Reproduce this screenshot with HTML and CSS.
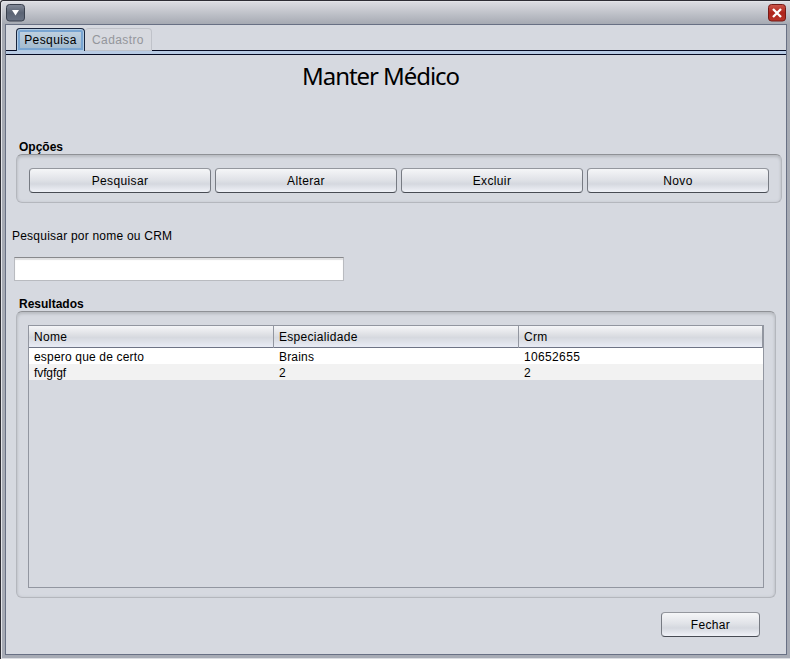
FILE: index.html
```html
<!DOCTYPE html>
<html lang="pt-BR">
<head>
<meta charset="utf-8">
<title>Manter Médico</title>
<link rel="stylesheet" href="styles.css">
</head>
<body>
<div class="window">
  <header class="titlebar">
    <svg class="icon" width="19" height="18" viewBox="0 0 19 18">
      <defs><linearGradient id="g" x1="0" y1="0" x2="0" y2="1"><stop offset="0" stop-color="#848b99"/><stop offset=".5" stop-color="#5b6474"/><stop offset="1" stop-color="#697283"/></linearGradient></defs>
      <rect x=".5" y=".5" width="18" height="16.5" rx="3" fill="url(#g)" stroke="#3a414e"/>
      <path d="M6 6h7l-3.500 5.500z" fill="#fff"/>
    </svg>
    <svg class="icon" width="18" height="18" viewBox="0 0 18 18">
      <defs><linearGradient id="r" x1="0" y1="0" x2="0" y2="1"><stop offset="0" stop-color="#cd584d"/><stop offset=".5" stop-color="#ae241b"/><stop offset="1" stop-color="#b83329"/></linearGradient></defs>
      <rect x=".5" y=".5" width="17" height="16.5" rx="3" fill="url(#r)" stroke="#761a16"/>
      <path d="M5 5l8 8M13 5l-8 8" stroke="#fff" stroke-width="2.300"/>
    </svg>
  </header>
  <main class="content">
    <nav class="tabs">
      <div class="tab active">Pesquisa</div>
      <div class="tab disabled">Cadastro</div>
    </nav>
    <div class="strip"></div>
    <h1>Manter Médico</h1>
    <h2 class="options-title">Opções</h2>
    <section class="panel options">
      <button>Pesquisar</button>
      <button>Alterar</button>
      <button>Excluir</button>
      <button>Novo</button>
    </section>
    <label for="q">Pesquisar por nome ou CRM</label>
    <input id="q" type="text">
    <h2 class="results-title">Resultados</h2>
    <section class="panel results">
      <div class="table">
        <div class="row head"><span>Nome</span><span>Especialidade</span><span>Crm</span></div>
        <div class="row"><span>espero que de certo</span><span>Brains</span><span class="number">10652655</span></div>
        <div class="row alt"><span class="narrow">fvfgfgf</span><span>2</span><span>2</span></div>
      </div>
    </section>
    <button class="close">Fechar</button>
  </main>
</div>
</body>
</html>
```
FILE: styles.css
```css
* { box-sizing: border-box; }
body {
  margin: 0;
  font: 12px/16px "Liberation Sans", Arial, sans-serif;
  color: #000;
}
.window {
  width: 790px;
  height: 659px;
  overflow: hidden;
  border-top: 1px solid #2d2d34;
  border-left: 1px solid #2d2d34;
  border-top-left-radius: 3px;
  box-shadow: inset 1px 1px #e3e4e8, inset 0 -1px #dcdee3;
  background: linear-gradient(#dddee3, #a6aab3 23px, #a7abb5);
  padding: 0 3px 4px 4px;
}
.titlebar {
  height: 23px;
  display: flex;
  justify-content: space-between;
  padding: 3px 1px 0;
}
.icon { display: block; }
.content {
  height: 631px;
  border: 1px solid #687084;
  background: #d6d9e0;
}
.tabs {
  height: 26px;
  display: flex;
  align-items: flex-end;
  padding-left: 10px;
  border-bottom: 1px solid #050a22;
}
.tab {
  height: 23px;
  padding-top: 3px;
  text-align: center;
  border-radius: 4px 4px 0 0;
  letter-spacing: .4px;
}
.active {
  width: 69px;
  margin-bottom: -1px;
  border: 1px solid #18243c;
  border-bottom: 0;
  background: linear-gradient(#c3d3e2, #9fb8cd);
  box-shadow: inset 0 0 0 1px #b1cbe3, inset 0 0 0 3px #79a5d2;
}
.disabled {
  width: 67px;
  margin-bottom: -1px;
  background: #d7d9df;
  border: 1px solid #bfc2c9;
  border-left: 0;
  color: #94969b;
}
.strip {
  height: 4px;
  background: #b8cbe4;
  border-bottom: 1px solid #050a22;
}
h1 {
  margin: 7px 0 0 296px;
  height: 77px;
  font: 24px/28px "Noto Sans", sans-serif;
  letter-spacing: -1.05px;
  white-space: nowrap;
}
h2 {
  margin: 0 0 0 13px;
  font-size: 12px;
  line-height: 16px;
  height: 15px;
}
.panel {
  margin-left: 10px;
  border: 1px solid #b4b7bd;
  border-top-color: #8f9196;
  border-radius: 6px;
  box-shadow: inset 0 2px 3px #b9bcc2, inset 0 0 3px #c5c8ce;
}
.options {
  width: 766px;
  height: 49px;
  padding: 13px 12px 0;
  display: flex;
  gap: 4px;
}
button {
  width: 182px;
  height: 25px;
  padding: 0;
  border: 1px solid #777b83;
  border-top-color: #94979e;
  border-bottom-color: #484c54;
  border-radius: 4px;
  background: linear-gradient(#f5f6f8, #e1e3e8 45%, #d5d8df 65%, #f0f2f8);
  font: 12px/16px "Liberation Sans", Arial, sans-serif;
  letter-spacing: .35px;
  color: #000;
}
label {
  display: block;
  margin: 25px 0 0 6px;
  letter-spacing: .22px;
}
input {
  display: block;
  width: 330px;
  height: 24px;
  margin: 13px 0 0 8px;
  border: 1px solid #b9bbc0;
  border-top-color: #88898c;
  background: #fff;
  box-shadow: inset 0 2px 1px #e0e0e2;
}
.results-title { margin-top: 15px; }
.results {
  width: 760px;
  height: 287px;
  padding: 13px 11px;
}
.table {
  width: 736px;
  height: 263px;
  border: 1px solid #9296a0;
}
.row {
  display: grid;
  grid-template-columns: 245px 245px 244px;
  height: 16px;
  line-height: 18px;
  background: #fff;
}
.row span { padding-left: 5px; white-space: nowrap; letter-spacing: .18px; }
.row .number { letter-spacing: .35px; }
.row .narrow { letter-spacing: -.1px; }
.head {
  height: 22px;
  line-height: 22px;
  border-bottom: 1px solid #6e7485;
  background: linear-gradient(#f5f6f8, #dfe1e5 40%, #d6d9df 55%, #e9ecf5);
}
.head span { border-right: 1px solid #9296a0; letter-spacing: .3px; }
.alt { background: #f2f2f2; }
.close { display: block; width: 99px; margin: 14px 0 0 655px; }
```
